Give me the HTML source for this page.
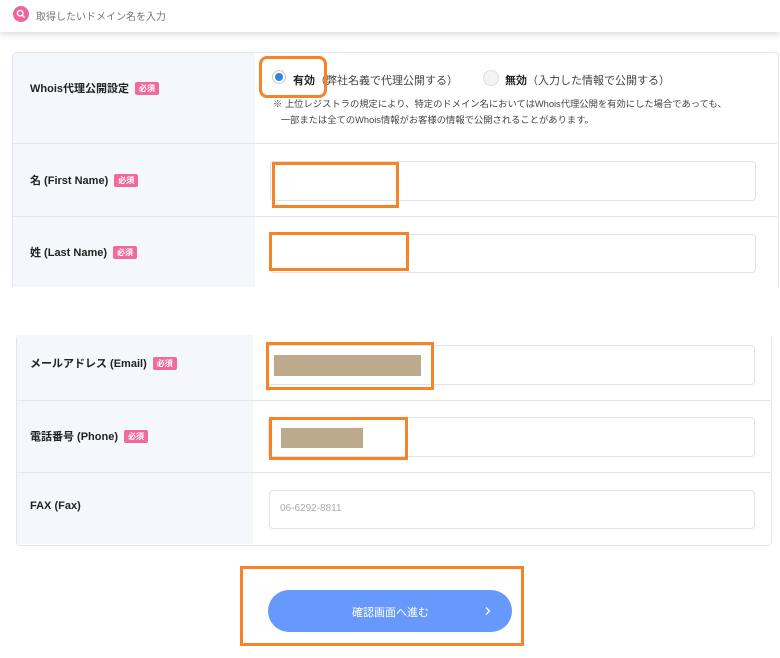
<!DOCTYPE html>
<html><head><meta charset="utf-8"><style>
body{margin:0;width:780px;height:658px;position:relative;background:#fff;font-family:"Liberation Sans","Noto Sans CJK JP",sans-serif;overflow:hidden;color:#222}
.a{position:absolute}
.top{left:0;top:0;width:780px;height:32px;background:#fff;box-shadow:0 3px 6px rgba(0,0,0,.12)}
.card{border:1px solid #e3e6ea;border-radius:4px;background:#fff}
.lab{font-size:11px;font-weight:bold;color:#222}
.req{display:inline-block;background:#f06b9c;color:#fff;font-size:8px;padding:1px 4px;border-radius:2px;margin-left:6px;vertical-align:1px}
.in{border:1px solid #dfe2e6;border-radius:4px;background:#fff}
.ob{border:3px solid #f5832a;box-sizing:border-box}
.line{height:1px;background:#e3e6ea}
</style></head><body>
<div class="a top"></div>
<div class="a" style="left:13px;top:6px;width:16px;height:16px;border-radius:50%;background:#f0649d"></div>
<svg class="a" style="left:16px;top:9px" width="10" height="10" viewBox="0 0 10 10"><circle cx="4.2" cy="4.2" r="2.8" fill="none" stroke="#fff" stroke-width="1.4"/><path d="M6.3 6.3L8.5 8.5" stroke="#fff" stroke-width="1.4"/></svg>
<div class="a" style="left:36px;top:8px;font-size:10px;color:#777">取得したいドメイン名を入力</div>

<div class="a card" style="left:12px;top:52px;width:765px;height:236px"></div>
<div class="a" style="left:13px;top:53px;width:242px;height:234px;background:#f4f7fc"></div>
<div class="a line" style="left:13px;top:143px;width:764px"></div>
<div class="a line" style="left:13px;top:216px;width:764px"></div>
<div class="a" style="left:0;top:287px;width:780px;height:48px;background:#fff"></div>
<div class="a lab" style="left:30px;top:80px">Whois代理公開設定<span class="req">必須</span></div>
<div class="a" style="left:272px;top:70px;width:12px;height:12px;border-radius:50%;border:1px solid #ccc;background:#fff"></div>
<div class="a" style="left:275px;top:73px;width:8px;height:8px;border-radius:50%;background:#2f86e6"></div>
<div class="a" style="left:293px;top:72px;font-size:11px"><b>有効</b><span style="color:#444">（弊社名義で代理公開する）</span></div>
<div class="a" style="left:483px;top:70px;width:14px;height:14px;border-radius:50%;border:1px solid #ddd;background:#f4f4f4"></div>
<div class="a" style="left:505px;top:72px;font-size:11px"><b>無効</b><span style="color:#444">（入力した情報で公開する）</span></div>
<div class="a" style="left:273px;top:96px;font-size:9.3px;color:#444;line-height:16px;white-space:nowrap">※ 上位レジストラの規定により、特定のドメイン名においてはWhois代理公開を有効にした場合であっても、<br>&nbsp;&nbsp;&nbsp;一部または全てのWhois情報がお客様の情報で公開されることがあります。</div>
<div class="a ob" style="left:259px;top:56px;width:68px;height:42px;border-radius:8px"></div>

<div class="a lab" style="left:30px;top:172px">名 (First Name)<span class="req">必須</span></div>
<div class="a in" style="left:270px;top:161px;width:484px;height:38px"></div>
<div class="a ob" style="left:272px;top:162px;width:127px;height:46px"></div>
<div class="a lab" style="left:30px;top:244px">姓 (Last Name)<span class="req">必須</span></div>
<div class="a in" style="left:270px;top:234px;width:484px;height:37px"></div>
<div class="a ob" style="left:269px;top:232px;width:140px;height:39px"></div>

<div class="a card" style="left:16px;top:335px;width:754px;height:210px;border-top:none"></div>
<div class="a" style="left:17px;top:335px;width:236px;height:209px;background:#f4f7fc"></div>
<div class="a line" style="left:17px;top:400px;width:753px"></div>
<div class="a line" style="left:17px;top:472px;width:753px"></div>
<div class="a lab" style="left:30px;top:355px">メールアドレス (Email)<span class="req">必須</span></div>
<div class="a in" style="left:266px;top:345px;width:487px;height:38px"></div>
<div class="a" style="left:274px;top:355px;width:147px;height:21px;background:#bda98b"></div>
<div class="a ob" style="left:266px;top:342px;width:168px;height:48px"></div>
<div class="a lab" style="left:30px;top:428px">電話番号 (Phone)<span class="req">必須</span></div>
<div class="a in" style="left:268px;top:417px;width:485px;height:38px"></div>
<div class="a" style="left:281px;top:428px;width:82px;height:20px;background:#bda98b"></div>
<div class="a ob" style="left:269px;top:417px;width:139px;height:43px"></div>
<div class="a lab" style="left:30px;top:500px">FAX (Fax)</div>
<div class="a in" style="left:269px;top:490px;width:484px;height:37px"></div>
<div class="a" style="left:280px;top:503px;font-size:10px;color:#aaa">06-6292-8811</div>

<div class="a" style="left:268px;top:590px;width:244px;height:42px;border-radius:21px;background:#6699fb"></div>
<div class="a" style="left:352px;top:604px;font-size:11px;color:#fff">確認画面へ進む</div>
<svg class="a" style="left:484px;top:606px" width="8" height="10" viewBox="0 0 8 10"><path d="M2 1.5L5.5 5L2 8.5" fill="none" stroke="#fff" stroke-width="1.3"/></svg>
<div class="a ob" style="left:240px;top:566px;width:284px;height:80px"></div>
</body></html>
